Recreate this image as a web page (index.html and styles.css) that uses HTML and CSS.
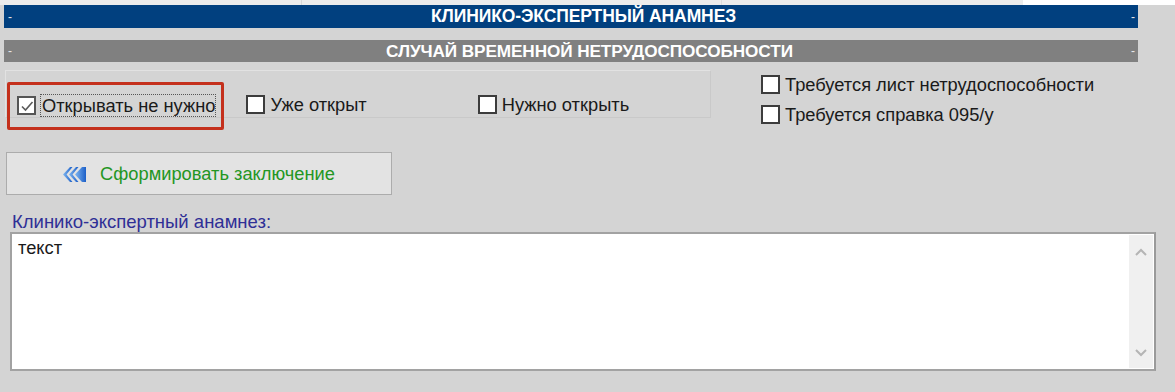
FILE: index.html
```html
<!DOCTYPE html>
<html lang="ru">
<head>
<meta charset="utf-8">
<link rel="stylesheet" href="styles.css">
</head>
<body>
<div class="topstrip">
  <div class="seg s1"></div>
  <div class="seg s2"></div>
  <div class="seg s3"></div>
  <div class="seg s4"></div>
</div>
<div class="bar blue">
  <span class="dash">-</span>
  <span class="title">КЛИНИКО-ЭКСПЕРТНЫЙ АНАМНЕЗ</span>
  <span class="dash">-</span>
</div>
<div class="bar gray">
  <span class="dash">-</span>
  <span class="title">СЛУЧАЙ ВРЕМЕННОЙ НЕТРУДОСПОСОБНОСТИ</span>
  <span class="dash">-</span>
</div>
<div class="options">
  <div class="group">
    <div class="highlight"></div>
    <label class="chk c1"><span class="box checked"><svg viewBox="0 0 14 14" width="14" height="14"><path d="M2 7.5 L5.5 11 L12.5 3" fill="none" stroke="#5a5a5a" stroke-width="1.6"/></svg></span><span class="txt focus">Открывать не нужно</span></label>
    <label class="chk c2"><span class="box"></span><span class="txt">Уже открыт</span></label>
    <label class="chk c3"><span class="box"></span><span class="txt">Нужно открыть</span></label>
  </div>
  <div class="rightcol">
    <label class="chk"><span class="box"></span><span class="txt">Требуется лист нетрудоспособности</span></label>
    <label class="chk"><span class="box"></span><span class="txt">Требуется справка 095/у</span></label>
  </div>
</div>
<button class="btn">
  <svg class="ico" viewBox="0 0 24 15" width="24" height="15">
    <defs>
      <linearGradient id="g" x1="0" y1="0" x2="1" y2="0">
        <stop offset="0" stop-color="#7fb6f0"/>
        <stop offset="1" stop-color="#1c5fc8"/>
      </linearGradient>
    </defs>
    <path d="M0 7.5 L7 0 L9.5 0 L3.5 7.5 L9.5 15 L7 15 Z" fill="url(#g)"/>
    <path d="M6 7.5 L13 0 L15.5 0 L9.5 7.5 L15.5 15 L13 15 Z" fill="url(#g)"/>
    <path d="M12 7.5 L19 0 L23 0 L23 15 L19 15 Z" fill="url(#g)"/>
  </svg>
  <span>Сформировать заключение</span>
</button>
<div class="fieldlabel">Клинико-экспертный анамнез:</div>
<div class="memo">
  <div class="memotext">текст</div>
  <div class="scroll">
    <svg viewBox="0 0 12 8" width="12" height="8"><path d="M1 7 L6 2 L11 7" fill="none" stroke="#b5b5b5" stroke-width="2"/></svg>
    <svg viewBox="0 0 12 8" width="12" height="8"><path d="M1 1 L6 6 L11 1" fill="none" stroke="#b5b5b5" stroke-width="2"/></svg>
  </div>
</div>
</body>
</html>
```
FILE: styles.css
```css
* { box-sizing: border-box; }
html, body { margin: 0; padding: 0; }
body {
  width: 1175px;
  height: 392px;
  overflow: hidden;
  background: #d4d4d4;
  font-family: "Liberation Sans", Arial, sans-serif;
  color: #1a1a1a;
}
.topstrip {
  display: flex;
  height: 5px;
  background: #ececec;
}
.seg { height: 5px; }
.s1 { width: 302px; border-right: 1px solid #d8d8d8; }
.s2 { width: 420px; border-right: 1px solid #dcdcdc; }
.s3 { width: 301px; }
.s4 { flex: 1; background: #ffffff; }
.bar {
  margin-left: 4px;
  width: 1134px;
  height: 23px;
  display: flex;
  align-items: center;
  color: #fff;
  padding: 0 3px 0 4px;
}
.blue { background: #01407f; }
.gray { background: #808080; margin-top: 12px; height: 22px; }
.dash { font-size: 12px; font-weight: normal; color: #e8e8e8; flex: none; }
.title {
  flex: 1;
  text-align: center;
  font-weight: bold;
  font-size: 17.5px;
  letter-spacing: -0.1px;
  white-space: nowrap;
}
.blue .title { padding-left: 24px; }
.gray .title { padding-left: 36px; font-size: 17.2px; }
.options {
  display: flex;
  margin-top: 8px;
  height: 62px;
}
.group {
  position: relative;
  margin-left: 5px;
  width: 706px;
  height: 48px;
  border: 1px solid #e2e2e2;
  border-right-color: #c9c9c9;
  border-bottom-color: #c9c9c9;
  display: flex;
  align-items: flex-start;
  padding: 23px 0 0 11px;
}
.highlight {
  position: absolute;
  left: 1px;
  top: 11px;
  width: 217px;
  height: 48px;
  border: 3px solid #c4301c;
  border-radius: 2px;
  pointer-events: none;
}
.chk {
  display: flex;
  align-items: center;
  font-size: 18.3px;
  line-height: 21px;
  color: #1a1a1a;
  white-space: nowrap;
}
.box {
  width: 19px;
  height: 19px;
  border: 2px solid #3c3c3c;
  background: #fff;
  display: flex;
  align-items: center;
  justify-content: center;
  flex: none;
}
.box.checked { border-color: #555; }
.txt { margin-left: 5px; }
.focus {
  border: 1px dotted #555;
  padding: 0 0 0 1px;
  margin-left: 4px;
}
.c2 { margin-left: 30px; }
.c3 { margin-left: 111px; }
.rightcol {
  margin-left: 50px;
  margin-top: 4px;
  display: flex;
  flex-direction: column;
  gap: 9px;
}
.btn {
  margin: 20px 0 0 6px;
  width: 386px;
  height: 43px;
  background: #e3e3e3;
  border: 1px solid #acacac;
  display: flex;
  align-items: center;
  justify-content: center;
  gap: 13px;
  font-family: "Liberation Sans", Arial, sans-serif;
  font-size: 18.3px;
  color: #239623;
  padding: 0;
}
.ico { display: block; margin-top: 1px; }
.fieldlabel {
  margin: 16px 0 0 12px;
  font-size: 18.5px;
  color: #2f2f96;
  line-height: 21px;
}
.memo {
  margin: 0 0 0 10px;
  width: 1146px;
  height: 139px;
  background: #fff;
  border: 2px solid #a2a2a2;
  border-right-color: #9a9a9a;
  display: flex;
  justify-content: space-between;
}
.memotext {
  padding: 3px 0 0 6px;
  font-size: 18.3px;
  color: #1a1a1a;
}
.scroll {
  width: 24px;
  margin: 1px 1px 1px 0;
  background: #f0f0f0;
  display: flex;
  flex-direction: column;
  align-items: center;
  justify-content: space-between;
  padding: 13px 0 11px;
}
```
